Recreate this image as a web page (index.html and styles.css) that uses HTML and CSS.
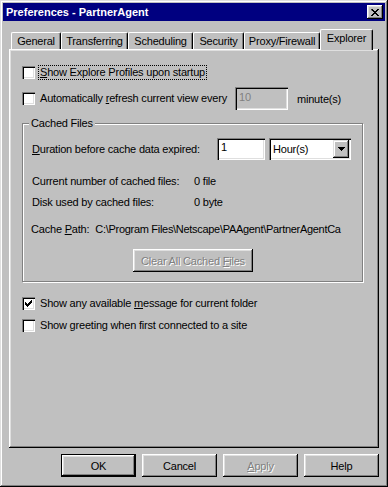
FILE: index.html
```html
<!DOCTYPE html>
<html lang="en">
<head>
    <meta charset="UTF-8">
    <title>Preferences - PartnerAgent</title>
    <link rel="stylesheet" href="styles.css">
</head>
<body>
    <div class="window">
        <div class="titlebar">
            <span class="title">Preferences - PartnerAgent</span>
            <span class="close">
                <svg width="8" height="7" viewBox="0 0 8 7"><path d="M0 0h2v1h1v1h2v-1h1v-1h2v1h-1v1h-1v1h-1v1h1v1h1v1h1v1h-2v-1h-1v-1h-2v1h-1v1h-2v-1h1v-1h1v-1h1v-1h-1v-1h-1z" fill="#000"/></svg>
            </span>
        </div>
        <div class="main">
            <div class="tabs">
                <div class="tab w-general">General</div>
                <div class="tab w-transfer">Transferring</div>
                <div class="tab w-sched">Scheduling</div>
                <div class="tab w-security">Security</div>
                <div class="tab w-proxy">Proxy/Firewall</div>
                <div class="tab active">Explorer</div>
            </div>
            <div class="panel">
                <div class="row first">
                    <span class="cb"></span>
                    <span class="label focus"><u>S</u>how Explore Profiles upon startup</span>
                </div>
                <div class="row refresh">
                    <span class="cb"></span>
                    <span class="label every">Automatically <u>r</u>efresh current view every</span>
                    <span class="edit off">10</span>
                    <span class="unit">minute(s)</span>
                </div>

                <fieldset class="group">
                    <legend>Cached Files</legend>
                    <div class="line duration">
                        <span class="dur-label"><u>D</u>uration before cache data expired:</span>
                        <span class="edit num">1</span>
                        <span class="combo">
                            <span class="combo-text">Hour(s)</span>
                            <span class="drop">
                                <svg width="7" height="4" viewBox="0 0 7 4"><path d="M0 0h7v1h-1v1h-1v1h-1v1h-1v-1h-1v-1h-1v-1h-1z" fill="#000"/></svg>
                            </span>
                        </span>
                    </div>
                    <div class="line info count">
                        <span class="key">Current number of cached files:</span>
                        <span>0 file</span>
                    </div>
                    <div class="line info disk">
                        <span class="key">Disk used by cached files:</span>
                        <span>0 byte</span>
                    </div>
                    <div class="line path">
                        <span class="key-path">Cache <u>P</u>ath:</span>
                        <span class="path-text">C:\Program Files\Netscape\PAAgent\PartnerAgentCa</span>
                    </div>
                    <div class="line clear-row">
                        <span class="btn clear disabled"><span>Clear All Cached <u>F</u>iles</span></span>
                    </div>
                </fieldset>

                <div class="row third">
                    <span class="cb">
                        <svg width="7" height="7" viewBox="0 0 7 7"><path d="M0 2h1v1h1v1h1v-1h1v-1h1v-1h1v-1h1v3h-1v1h-1v1h-1v1h-1v1h-1v-1h-1v-1h-1v-1h-1z" fill="#000"/></svg>
                    </span>
                    <span class="label">Show any available <u>m</u>essage for current folder</span>
                </div>
                <div class="row fourth">
                    <span class="cb"></span>
                    <span class="label">Show <u>g</u>reeting when first connected to a site</span>
                </div>
            </div>

            <div class="buttons">
                <span class="btn default"><span>OK</span></span>
                <span class="btn"><span>Cancel</span></span>
                <span class="btn disabled"><span><u>A</u>pply</span></span>
                <span class="btn"><span>Help</span></span>
            </div>
        </div>
    </div>
</body>
</html>
```

FILE: styles.css
```css
*{
    margin:0;
    padding:0;
    box-sizing:border-box;
}
body{
    background:#c0c0c0;
    font-family:"Liberation Sans", Arial, sans-serif;
    font-size:11px;
    letter-spacing:-0.2px;
    color:#000;
}
.window{
    width:388px;
    height:487px;
    padding:3px;
    background:#c0c0c0;
    box-shadow:inset -1px -1px #000, inset 1px 1px #dfdfdf, inset -2px -2px #808080, inset 2px 2px #fff;
}
.titlebar{
    height:18px;
    background:#000080;
    color:#fff;
    display:flex;
    align-items:center;
    justify-content:space-between;
    padding:0 2px 0 3px;
}
.title{
    font-weight:bold;
    font-size:11px;
    letter-spacing:0;
}
.close{
    width:16px;
    height:14px;
    background:#c0c0c0;
    display:flex;
    align-items:center;
    justify-content:center;
    padding-right:1px;
    box-shadow:inset -1px -1px #000, inset 1px 1px #fff, inset -2px -2px #808080, inset 2px 2px #dfdfdf;
}
.close svg{
    display:block;
}

.main{
    padding:8px 6px 0 6px;
}
.tabs{
    height:20px;
    display:flex;
    align-items:flex-end;
    padding-left:2px;
    position:relative;
    z-index:1;
}
.tab{
    height:17px;
    line-height:16px;
    text-align:center;
    border-left:1px solid #fff;
    border-top:1px solid #fff;
    border-right:1px solid #000;
    border-radius:2px 2px 0 0;
    box-shadow:inset -1px 0 #808080;
    background:#c0c0c0;
}
.w-general{ width:50px; }
.w-transfer{ width:67px; }
.w-sched{ width:65px; }
.w-security{ width:51px; }
.w-proxy{ width:76px; }
.tab.active{
    width:53px;
    height:21px;
    line-height:17px;
    margin-bottom:-1px;
}

.panel{
    height:399px;
    padding:16px 0 0 13px;
    background:#c0c0c0;
    box-shadow:inset -1px -1px #000, inset 1px 1px #fff, inset -2px -2px #808080, inset 2px 2px #dfdfdf;
}
.row{
    display:flex;
    align-items:center;
    height:15px;
}
.row.refresh{
    height:23px;
    margin-top:7px;
}
.cb{
    width:13px;
    height:13px;
    background:#fff;
    flex:none;
    display:flex;
    align-items:center;
    justify-content:center;
    box-shadow:inset 1px 1px #808080, inset 2px 2px #000, inset -1px -1px #fff, inset -2px -2px #dfdfdf;
}
.cb svg{
    display:block;
}
.label{
    margin-left:4px;
    padding:0 1px;
    line-height:13px;
    white-space:nowrap;
}
.focus{
    outline:1px dotted #000;
}
.every{
    width:196px;
    flex:none;
}
.edit{
    height:22px;
    line-height:20px;
    padding-left:4px;
    background:#fff;
    box-shadow:inset 1px 1px #808080, inset 2px 2px #000, inset -1px -1px #fff, inset -2px -2px #dfdfdf;
}
.edit.off{
    width:53px;
    background:#c0c0c0;
    color:#808080;
    height:23px;
    line-height:21px;
}
.unit{
    margin-left:9px;
}

.group{
    width:341px;
    min-width:0;
    margin-top:7px;
    padding:0 9px 9px 9px;
    border:1px solid #808080;
    box-shadow:1px 1px 0 #fff, inset 1px 1px 0 #fff;
}
.group legend{
    line-height:13px;
    padding:0 2px;
    margin-left:-3px;
    background:#c0c0c0;
}
.line{
    display:flex;
    align-items:center;
    white-space:nowrap;
    min-width:0;
}
.duration{
    height:22px;
    margin-top:8px;
}
.dur-label{
    width:185px;
    flex:none;
}
.edit.num{
    width:48px;
    line-height:18px;
    flex:none;
}
.combo{
    width:82px;
    height:22px;
    flex:none;
    margin-left:4px;
    background:#fff;
    display:flex;
    align-items:center;
    justify-content:space-between;
    padding:0 2px 0 4px;
    box-shadow:inset 1px 1px #808080, inset 2px 2px #000, inset -1px -1px #fff, inset -2px -2px #dfdfdf;
}
.drop{
    width:16px;
    height:18px;
    background:#c0c0c0;
    display:flex;
    align-items:center;
    justify-content:center;
    box-shadow:inset -1px -1px #000, inset 1px 1px #dfdfdf, inset -2px -2px #808080, inset 2px 2px #fff;
}
.drop svg{
    display:block;
}
.info{
    height:13px;
}
.count{
    margin-top:14px;
}
.disk{
    margin-top:8px;
}
.key{
    width:162px;
    flex:none;
}
.path{
    height:13px;
    margin-top:14px;
}
.key-path{
    margin-right:6px;
    margin-left:-1px;
    flex:none;
}
.path-text{
    letter-spacing:-0.3px;
}
.clear-row{
    justify-content:center;
    margin-top:14px;
    padding-left:1px;
}

.btn{
    display:flex;
    align-items:center;
    justify-content:center;
    width:75px;
    height:23px;
    background:#c0c0c0;
    box-shadow:inset -1px -1px #000, inset 1px 1px #fff, inset -2px -2px #808080, inset 2px 2px #dfdfdf;
}
.btn.clear{
    width:120px;
}
.btn.disabled{
    color:#808080;
    text-shadow:1px 1px 0 #fff;
}
.btn.default{
    box-shadow:inset 0 0 0 1px #000, inset -2px -2px #000, inset 2px 2px #fff, inset -3px -3px #808080, inset 3px 3px #dfdfdf;
}

.row.third{
    margin-top:14px;
}
.row.fourth{
    margin-top:7px;
}

.buttons{
    display:flex;
    justify-content:flex-end;
    gap:6px;
    margin-top:6px;
}
```
